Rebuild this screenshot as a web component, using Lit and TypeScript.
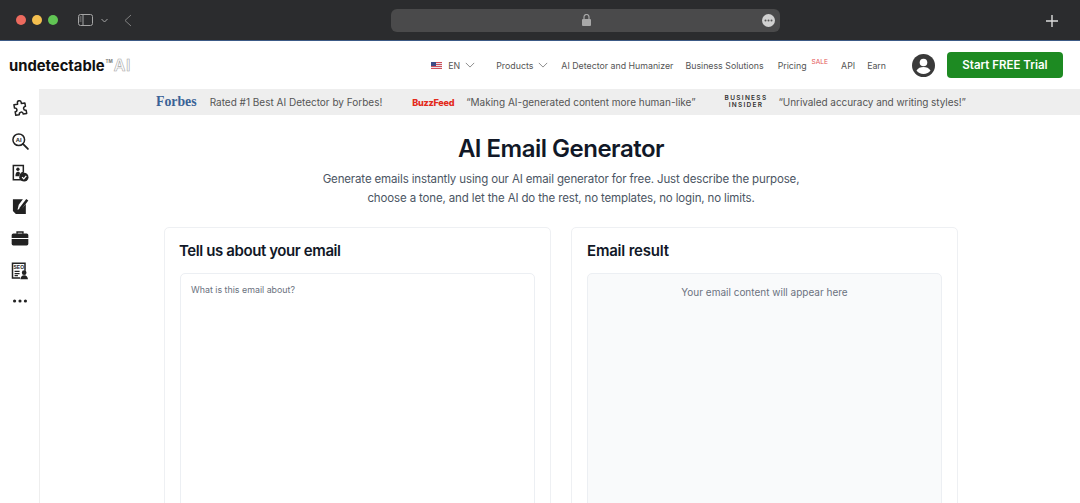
import { LitElement, html, css, svg } from "lit";
import { customElement } from "lit/decorators.js";

const sideIcons = [
  svg`<path d="M8 3.5c0-1.4 1-2.3 2.3-2.3s2.300.9 2.300 2.300V5h4.200v4.200c-1.700 0-2.700 1-2.700 2.400s1 2.400 2.700 2.400v3.800h-4.200c0-1.700-1-2.700-2.400-2.700s-2.400 1-2.400 2.700H3.500v-4.300c1.500 0 2.500-1 2.500-2.300S5 8.900 3.500 8.900V5H8Z" transform="rotate(-10 10 10)" fill="none" stroke="#222" stroke-width="1.800" stroke-linejoin="round"/>`,
  svg`<circle cx="8.500" cy="8.500" r="7" fill="none" stroke="#222" stroke-width="1.800"/><path d="m13.500 13.500 6 6" stroke="#222" stroke-width="2.200" stroke-linecap="round"/><text x="8.500" y="11" text-anchor="middle" font-family="Liberation Sans" font-size="7" font-weight="700" fill="#222">AI</text>`,
  svg`<path d="M2 1h12v8a6 6 0 0 0-3 9H2Z" fill="none" stroke="#222" stroke-width="1.800"/><circle cx="7.500" cy="5.500" r="2" fill="#222"/><path d="M4.500 14c0-3.500 1-5.500 3-5.500 1.200 0 2 .5 2.500 1.500L9 14Z" fill="#222"/><circle cx="15" cy="15" r="5.200" fill="#222"/><path d="m12.500 15 2 2 3-3.500" fill="none" stroke="#fff" stroke-width="1.500"/>`,
  svg`<path d="M1.500 2h12l-5 6.500-1.500 6 6-2 4-5v12H5l-3.500-3.500Z" fill="#222"/><path d="m9.500 12 8-10.500 2.500 2-8 10.500-3.500 1.200Z" fill="#222"/>`,
  svg`<path d="M6.500 5V2.700h7V5" fill="none" stroke="#222" stroke-width="1.800"/><path d="M2 4.500h16a2 2 0 0 1 2 2V10H0V6.500a2 2 0 0 1 2-2Z" fill="#222"/><path d="M0 11.300h20V17a2 2 0 0 1-2 2H2a2 2 0 0 1-2-2Z" fill="#222"/>`,
  svg`<path d="M10 18.500H1V.8h15v9" fill="none" stroke="#222" stroke-width="1.800"/><text x="8.500" y="7.500" text-anchor="middle" font-family="Liberation Sans" font-size="6" font-weight="700" fill="#222">SEO</text><path d="M3.500 10.500h6M3.500 13h6M3.500 15.500h4" stroke="#222" stroke-width="1.500"/><circle cx="15" cy="12" r="2.800" fill="#222"/><path d="M10.500 20c0-3 1.700-5 4.500-5s4.500 2 4.500 5Z" fill="#222"/>`,
  svg`<circle cx="3.500" cy="10" r="1.900" fill="#222"/><circle cx="10" cy="10" r="1.900" fill="#222"/><circle cx="16.500" cy="10" r="1.900" fill="#222"/>`,
];

const chevron = (tight = false) =>
  html`<svg class="chev ${tight ? "tight" : ""}" viewBox="0 0 12 7" aria-hidden="true"><path d="m1 1 5 5 5-5" fill="none" stroke="#777" stroke-width="1"/></svg>`;

@customElement("app-root")
export class AppRoot extends LitElement {
  static styles = css`
    :host { display: block; width: 1080px; height: 503px; overflow: hidden; background: #fff; font-family: Inter, "Liberation Sans", sans-serif; color: #111827; }
    .chrome { height: 41px; box-sizing: border-box; background: #2b2c2e; border-bottom: 1px solid #3c5a86; display: grid; grid-template-columns: 391px 389px 1fr; align-items: center; }
    .left { display: flex; align-items: center; padding-left: 16px; }
    .dot { width: 10px; height: 10px; border-radius: 50%; margin-right: 6px; }
    .sideglyph { margin-left: 14px; width: 15px; height: 12px; }
    .smallchev { margin-left: 8px; width: 7px; height: 5px; }
    .back { margin-left: 16px; width: 8px; height: 13px; }
    .url { height: 23px; border-radius: 6px; background: #4a4a4b; display: flex; align-items: center; justify-content: center; position: relative; }
    .lock { width: 9px; height: 12px; margin-left: 1px; }
    .more { position: absolute; right: 5px; top: 5px; width: 13px; height: 13px; }
    .plus { justify-self: end; margin: 1px 22px 0 0; width: 12px; height: 12px; }
    .nav { height: 48px; display: flex; align-items: center; padding: 0 17px 0 9px; }
    .logo { display: flex; align-items: baseline; font-size: 14.8px; font-weight: 700; color: #111; }
    .tm { font-size: 4.5px; margin-left: 1px; align-self: flex-start; margin-top: 4px; color: #777; }
    .ai { font-size: 16px; font-weight: 600; color: #fff; -webkit-text-stroke: .6px #a5a5a5; margin-left: 1px; letter-spacing: .5px; }
    .links { margin-left: auto; display: flex; align-items: center; font-size: 8.8px; color: #555; white-space: nowrap; }
    .flag { width: 11px; height: 7px; margin-right: 6px; }
    .chev { width: 10px; height: 6px; margin-left: 5px; margin-right: 21px; }
    .chev.tight { margin-right: 13px; }
    .lnk { margin-right: 12px; }
    .lnk.wide { margin-right: 14px; }
    .price { margin-right: 5px; }
    .sale { font-size: 6.6px; color: #e45555; margin: -7px 13px 0 0; }
    .user { width: 23px; height: 23px; margin: 0 12px 0 26px; }
    .cta { width: 116px; height: 26px; border-radius: 4px; background: #1d8a22; color: #fff; font-size: 11.5px; font-weight: 600; display: flex; align-items: center; justify-content: center; }
    .body { display: grid; grid-template-columns: 40px 1fr; height: 414px; }
    .side { display: flex; flex-direction: column; align-items: center; padding-top: 9px; gap: 12.6px; border-right: 1px solid #eeeeee; }
    .side svg { width: 20px; height: 20px; }
    .side svg:last-child { margin-top: -3px; }
    .banner { height: 26px; background: #eeeeee; display: flex; align-items: center; font-size: 10px; color: #555; white-space: nowrap; padding-left: 116px; }
    .forbes { font-family: "Liberation Serif", serif; font-weight: 700; font-size: 13.8px; color: #3a6296; margin-right: 13px; }
    .buzz { font-weight: 800; font-size: 9.1px; color: #e32a1c; letter-spacing: -.3px; margin: 0 12px 0 30px; }
    .bi { font-weight: 600; font-size: 6.5px; line-height: 7px; letter-spacing: 1.3px; color: #333; text-align: center; margin: 0 11px 0 29px; }
    .tight-quote { letter-spacing: -.05px; }
    h1 { margin: 21px 0 0; text-align: center; font-size: 24px; line-height: 25px; font-weight: 600; letter-spacing: -.5px; color: #111827; padding-left: 2px; }
    .lead { margin: 9px 0 0; text-align: center; font-size: 11.5px; line-height: 19px; letter-spacing: -.14px; color: #4b5563; padding-left: 2px; }
    .cards { display: flex; justify-content: center; gap: 20px; margin-top: 19px; padding-left: 2px; }
    .card { width: 387px; height: 400px; box-sizing: border-box; border: 1px solid #eef0f3; border-radius: 5px; padding: 12px 15px; }
    h2 { margin: 0; font-size: 15px; line-height: 21px; font-weight: 600; letter-spacing: -.4px; color: #111827; }
    h2.first { margin-left: -1px; }
    h2.second { letter-spacing: -.2px; }
    .box { height: 330px; margin-top: 12px; border: 1px solid #eceff3; border-radius: 5px; font-size: 8.85px; color: #6b7280; padding: 10px; }
    .result { background: #f9fafb; text-align: center; font-size: 10px; padding-top: 12px; }
  `;

  render() {
    return html`
      <div class="chrome">
        <div class="left">
          <span class="dot" style="background:#ec6a5e"></span><span class="dot" style="background:#f4bf4f"></span><span class="dot" style="background:#61c554"></span>
          <svg class="sideglyph" viewBox="0 0 15 12"><rect x=".5" y=".5" width="14" height="11" rx="2" fill="none" stroke="#a5a5a5"/><path d="M5 .5v11" stroke="#a5a5a5"/><path d="M1.500 3h2M1.500 5h2M1.500 7h2" stroke="#a5a5a5" stroke-width=".8"/></svg>
          <svg class="smallchev" viewBox="0 0 7 5"><path d="m.5 1 3 3 3-3" fill="none" stroke="#a5a5a5"/></svg>
          <svg class="back" viewBox="0 0 8 13"><path d="M7 1 1 6.500 7 12" fill="none" stroke="#808080"/></svg>
        </div>
        <div class="url">
          <svg class="lock" viewBox="0 0 9 12"><rect y="5" width="9" height="7" rx="1" fill="#a8a8a8"/><path d="M2 5.500V3a2.500 2.500 0 0 1 5 0v2.500" fill="none" stroke="#a8a8a8" stroke-width="1.200"/></svg>
          <svg class="more" viewBox="0 0 13 13"><circle cx="6.500" cy="6.500" r="6.500" fill="#d0d0d0"/><circle cx="3.500" cy="6.500" r="1" fill="#555"/><circle cx="6.500" cy="6.500" r="1" fill="#555"/><circle cx="9.500" cy="6.500" r="1" fill="#555"/></svg>
        </div>
        <svg class="plus" viewBox="0 0 12 12"><path d="M6 0v12M0 6h12" stroke="#dcdcdc" stroke-width="1.400"/></svg>
      </div>
      <div class="nav">
        <div class="logo">undetectable<span class="tm">TM</span><span class="ai">AI</span></div>
        <div class="links">
          <svg class="flag" viewBox="0 0 11 7"><rect width="11" height="7" fill="#e8e4ea"/><path d="M0 0h11v1H0ZM0 2h11v1H0ZM0 4h11v1H0ZM0 6h11v1H0Z" fill="#d0505a"/><rect width="5" height="4" fill="#3f4c86"/></svg>
          <span>EN</span>${chevron()}
          <span>Products</span>${chevron(true)}
          <span class="lnk">AI Detector and Humanizer</span>
          <span class="lnk wide">Business Solutions</span>
          <span class="price">Pricing</span><span class="sale">SALE</span>
          <span class="lnk">API</span>
          <span>Earn</span>
          <svg class="user" viewBox="0 0 23 23"><circle cx="11.500" cy="11.500" r="11.500" fill="#3a3a3a"/><circle cx="11.500" cy="8.500" r="3.800" fill="#fff"/><path d="M4.500 16.500c1.500-2.500 4-3.500 7-3.500s5.500 1 7 3.500c-1.500 2-4 3.500-7 3.500s-5.500-1.500-7-3.500Z" fill="#fff"/></svg>
          <div class="cta">Start FREE Trial</div>
        </div>
      </div>
      <div class="body">
        <div class="side">
          ${sideIcons.map((i) => html`<svg viewBox="-2 -2 24 24">${i}</svg>`)}
        </div>
        <div class="main">
          <div class="banner">
            <span class="forbes">Forbes</span><span>Rated #1 Best AI Detector by Forbes!</span>
            <span class="buzz">BuzzFeed</span><span>“Making AI-generated content more human-like”</span>
            <span class="bi">BUSINESS<br />INSIDER</span><span class="tight-quote">“Unrivaled accuracy and writing styles!”</span>
          </div>
          <h1>AI Email Generator</h1>
          <p class="lead">Generate emails instantly using our AI email generator for free. Just describe the purpose,<br />choose a tone, and let the AI do the rest, no templates, no login, no limits.</p>
          <div class="cards">
            <section class="card">
              <h2 class="first">Tell us about your email</h2>
              <div class="box">What is this email about?</div>
            </section>
            <section class="card">
              <h2 class="second">Email result</h2>
              <div class="box result">Your email content will appear here</div>
            </section>
          </div>
        </div>
      </div>
    `;
  }
}
